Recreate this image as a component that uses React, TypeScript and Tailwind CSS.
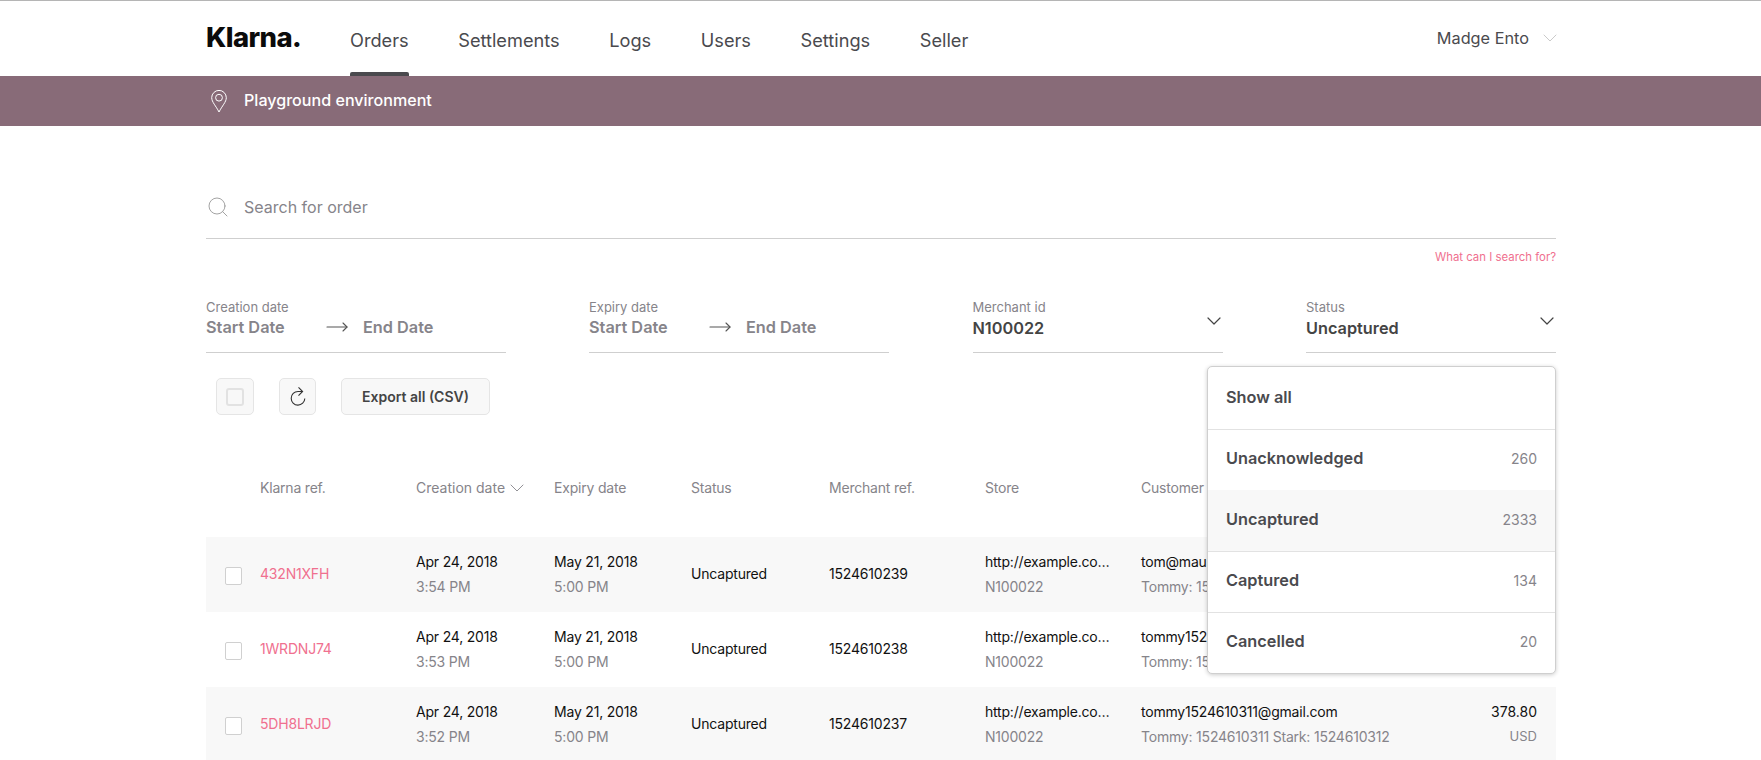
import { ChevronDown, Search, MoveRight } from 'lucide-react';

const navItems = ['Orders', 'Settlements', 'Logs', 'Users', 'Settings', 'Seller'];

const orders = [
  { ref: '432N1XFH', time: '3:54 PM', merchantRef: '1524610239', email: 'tom@mauro.com', names: 'Tommy: 1524610239', amount: '' },
  { ref: '1WRDNJ74', time: '3:53 PM', merchantRef: '1524610238', email: 'tommy1524610238@gmail.com', names: 'Tommy: 1524610238', amount: '' },
  { ref: '5DH8LRJD', time: '3:52 PM', merchantRef: '1524610237', email: 'tommy1524610311@gmail.com', names: 'Tommy: 1524610311 Stark: 1524610312', amount: '378.80' },
];

const statusOptions = [
  { label: 'Unacknowledged', count: '260', height: 'h-[60px] pb-[4px]' },
  { label: 'Uncaptured', count: '2333', height: 'h-[62px] pb-[3px] border-b border-[#e2e2e2] bg-[#f8f8f8]' },
  { label: 'Captured', count: '134', height: 'h-[61px] pb-[4px] border-b border-[#e2e2e2]' },
  { label: 'Cancelled', count: '20', height: 'h-[60px] pb-[4px]' },
];

function DateRange({ label }: { label: string }) {
  return (
    <div className="w-[300px] h-[55px] border-b border-[#cfcfcf] text-[#86848a]">
      <div className="text-[13px] leading-[16px] mt-[1px]">{label}</div>
      <div className="flex items-center text-[16.3px] leading-[20px] font-semibold">
        <span className="w-[119px]">Start Date</span>
        <MoveRight size={24} strokeWidth={1.1} className="text-[#555]" />
        <span className="ml-[14px]">End Date</span>
      </div>
    </div>
  );
}

function SelectField({ label, value }: { label: string; value: string }) {
  return (
    <div className="w-[250px] h-[55px] border-b border-[#cfcfcf] flex items-start justify-between">
      <div>
        <div className="text-[13px] leading-[16px] text-[#86848a] mt-[1px]">{label}</div>
        <div className="text-[16.3px] leading-[20px] mt-[3px] font-semibold text-[#444]">{value}</div>
      </div>
      <ChevronDown size={24} strokeWidth={1.2} className="text-[#444] mt-[11px] mr-[-3px]" />
    </div>
  );
}

export default function App() {
  return (
    <div className="h-[760px] overflow-hidden bg-white border-t border-[#b5b5b5] font-['Inter',sans-serif]">
      <header className="h-[75px] pl-[206px] pr-[205px] flex items-stretch justify-between">
        <div className="flex items-stretch">
          <div className="w-[144px] flex items-center font-extrabold text-[27.5px] tracking-[-0.6px] text-[#0b0b0b] pb-[2px]">Klarna.</div>
          <nav className="flex gap-[49.6px] text-[18.2px] text-[#4a4a4e]">
            {navItems.map((item, i) => (
              <a key={item} className="relative flex items-center pt-[4px]">
                {item}
                {i === 0 && <span className="absolute bottom-0 left-0 right-0 h-[4px] rounded-t-[2px] bg-[#4a4a4e]" />}
              </a>
            ))}
          </nav>
        </div>
        <div className="flex items-center gap-[9px] text-[16.3px] text-[#4a4a4e] pb-[1px]">
          Madge Ento
          <ChevronDown size={24} strokeWidth={0.9} className="text-[#c4c4c4] mr-[-6px]" />
        </div>
      </header>

      <div className="h-[50px] bg-[#886b78] px-[206px] flex items-center text-white text-[16.1px] font-medium">
        <svg width="16" height="23" viewBox="0 0 16 23" fill="none" stroke="currentColor" strokeWidth="1" className="ml-[5px] mr-[17px] mt-[1px]">
          <path d="M8 22 C5 16 0.7 12 0.7 7.7 A7.3 7.3 0 0 1 15.3 7.7 C15.3 12 11 16 8 22 Z" />
          <circle cx="8" cy="7.7" r="3.4" />
        </svg>
        <span className="pb-[2px]">Playground environment</span>
      </div>

      <main className="relative ml-[206px] mr-[205px] pt-[64px]">
        <div className="h-[49px] border-b border-[#cfcfcf] flex items-start gap-[14px] text-[16px] text-[#86848a]">
          <Search size={24} strokeWidth={0.9} className="text-[#999] mt-[5px]" />
          <span className="mt-[5px]">Search for order</span>
        </div>
        <div className="mt-[10px] text-right text-[11.4px] leading-[16px] text-[#f0708f]">What can I search for?</div>

        <div className="mt-[33px] flex justify-between">
          <div className="flex gap-[83px]">
            <DateRange label="Creation date" />
            <DateRange label="Expiry date" />
          </div>
          <SelectField label="Merchant id" value="N100022" />
          <SelectField label="Status" value="Uncaptured" />
        </div>

        <div className="mt-[25px] ml-[10px] flex items-center gap-[25px]">
          <div className="w-[38px] h-[37px] rounded-[5px] border border-[#e5e5e5] bg-[#f8f8f8] flex items-center justify-center">
            <div className="w-[18px] h-[18px] rounded-[3px] border-2 border-[#e2e2e2] bg-[#f8f8f8]" />
          </div>
          <div className="w-[37px] h-[37px] rounded-[5px] border border-[#e5e5e5] bg-[#f8f8f8] flex items-center justify-center">
            <svg width="16" height="19" viewBox="0 0 16 19" fill="none" stroke="#333" strokeWidth="1.1">
              <path d="M12 4.5 H8 A6.8 6.8 0 1 0 14.8 11.5" />
              <path d="M8.5 0.4 L12.6 4.5 L8.5 8.6" />
            </svg>
          </div>
          <div className="h-[37px] px-[20px] rounded-[5px] border border-[#e5e5e5] bg-[#f8f8f8] flex items-center text-[14px] font-semibold text-[#444]">
            Export all (CSV)
          </div>
        </div>

        <div className="mt-[62px] h-[60px] grid grid-cols-[54px_156px_138px_137px_138px_156px_156px_1fr] text-[14px] tracking-[-0.2px] text-[#86848a]">
          <span />
          <span>Klarna ref.</span>
          <span className="flex items-start tracking-normal">
            Creation date
            <ChevronDown size={24} strokeWidth={0.9} className="-mt-[1px]" />
          </span>
          <span>Expiry date</span>
          <span>Status</span>
          <span>Merchant ref.</span>
          <span>Store</span>
          <span>Customer</span>
        </div>

        {orders.map((o, i) => (
          <div
            key={o.ref}
            className={`h-[75px] grid grid-cols-[54px_156px_138px_137px_138px_156px_156px_1fr] items-center text-[14px] tracking-[-0.2px] ${i % 2 === 0 ? 'bg-[#f8f8f8]' : 'bg-white'}`}
          >
            <div className="pl-[19px] pt-[2px]">
              <div className="w-[17px] h-[18px] rounded-[2px] border border-[#d0d0d0] bg-white" />
            </div>
            <div className="text-[#f0708f] -mt-[2px]">{o.ref}</div>
            <div className="leading-[25px] -mt-[2px]">
              <div className="text-[#111]">Apr 24, 2018</div>
              <div className="text-[#86848a]">{o.time}</div>
            </div>
            <div className="leading-[25px] -mt-[2px]">
              <div className="text-[#111]">May 21, 2018</div>
              <div className="text-[#86848a]">5:00 PM</div>
            </div>
            <div className="text-[#111] -mt-[2px]">Uncaptured</div>
            <div className="text-[#111] -mt-[2px]">{o.merchantRef}</div>
            <div className="leading-[25px] -mt-[2px]">
              <div className="text-[#111] w-[126px] truncate">http://example.com/</div>
              <div className="text-[#86848a]">N100022</div>
            </div>
            <div className="leading-[25px] -mt-[2px] flex justify-between pr-[19px]">
              <div>
                <div className="text-[#111]">{o.email}</div>
                <div className="text-[#86848a]">{o.names}</div>
              </div>
              <div className="text-right tracking-normal">
                <div className="text-[#111]">{o.amount}</div>
                <div className="text-[#86848a] text-[13px]">USD</div>
              </div>
            </div>
          </div>
        ))}

        <div className="absolute top-[240px] right-0 w-[349px] bg-white rounded-[5px] border border-[#cfcfcf] shadow-[0_1px_4px_rgba(0,0,0,0.2)] overflow-hidden text-[16.3px] font-semibold text-[#4a4a4e]">
          <div className="h-[63px] pb-[2px] flex items-center pl-[18px] pr-[18px] border-b border-[#e2e2e2]">Show all</div>
          {statusOptions.map((opt) => (
            <div key={opt.label} className={`${opt.height} flex items-center justify-between pl-[18px] pr-[18px]`}>
              {opt.label}
              <span className="text-[14px] font-normal text-[#86848a]">{opt.count}</span>
            </div>
          ))}
        </div>
      </main>
    </div>
  );
}
